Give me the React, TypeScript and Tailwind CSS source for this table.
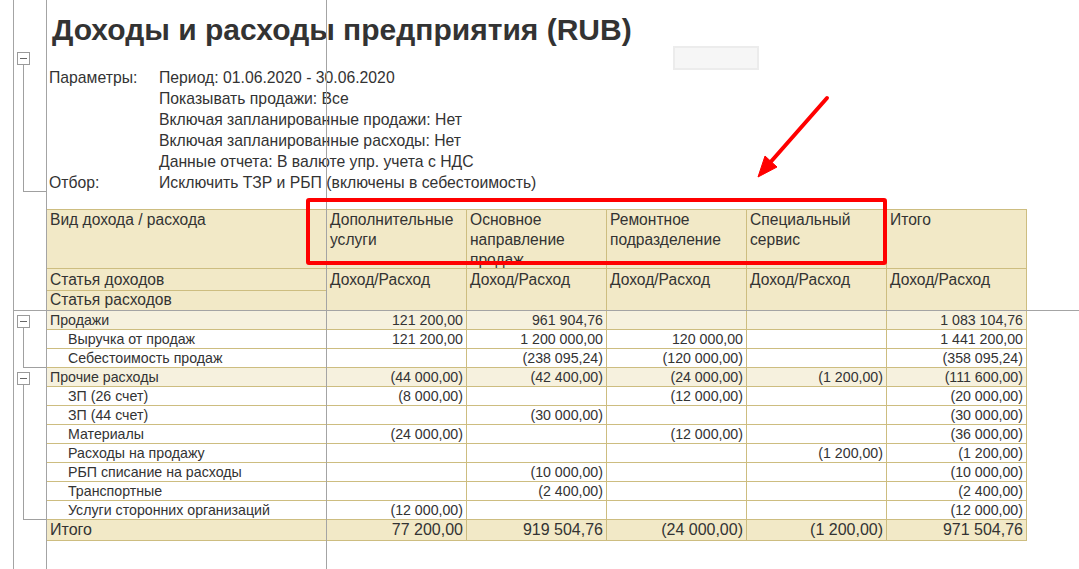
import React from 'react';

type GutterKind = 'none' | 'box' | 'line' | 'end';

interface DataRow {
  label: string;
  vals: string[];
  group?: boolean;
  gutter: GutterKind;
}

const params: [string, string][] = [
  ['Параметры:', 'Период: 01.06.2020 - 30.06.2020'],
  ['', 'Показывать продажи: Все'],
  ['', 'Включая запланированные продажи: Нет'],
  ['', 'Включая запланированные расходы: Нет'],
  ['', 'Данные отчета: В валюте упр. учета с НДС'],
  ['Отбор:', 'Исключить ТЗР и РБП (включены в себестоимость)'],
];

const columns: string[][] = [
  ['Дополнительные', 'услуги'],
  ['Основное', 'направление', 'продаж'],
  ['Ремонтное', 'подразделение'],
  ['Специальный', 'сервис'],
  ['Итого'],
];

const rows: DataRow[] = [
  { label: 'Продажи', group: true, gutter: 'box', vals: ['121 200,00', '961 904,76', '', '', '1 083 104,76'] },
  { label: 'Выручка от продаж', gutter: 'line', vals: ['121 200,00', '1 200 000,00', '120 000,00', '', '1 441 200,00'] },
  { label: 'Себестоимость продаж', gutter: 'end', vals: ['', '(238 095,24)', '(120 000,00)', '', '(358 095,24)'] },
  { label: 'Прочие расходы', group: true, gutter: 'box', vals: ['(44 000,00)', '(42 400,00)', '(24 000,00)', '(1 200,00)', '(111 600,00)'] },
  { label: 'ЗП (26 счет)', gutter: 'line', vals: ['(8 000,00)', '', '(12 000,00)', '', '(20 000,00)'] },
  { label: 'ЗП (44 счет)', gutter: 'line', vals: ['', '(30 000,00)', '', '', '(30 000,00)'] },
  { label: 'Материалы', gutter: 'line', vals: ['(24 000,00)', '', '(12 000,00)', '', '(36 000,00)'] },
  { label: 'Расходы на продажу', gutter: 'line', vals: ['', '', '', '(1 200,00)', '(1 200,00)'] },
  { label: 'РБП списание на расходы', gutter: 'line', vals: ['', '(10 000,00)', '', '', '(10 000,00)'] },
  { label: 'Транспортные', gutter: 'line', vals: ['', '(2 400,00)', '', '', '(2 400,00)'] },
  { label: 'Услуги сторонних организаций', gutter: 'end', vals: ['(12 000,00)', '', '', '', '(12 000,00)'] },
];

const totals = ['77 200,00', '919 504,76', '(24 000,00)', '(1 200,00)', '971 504,76'];

function Gutter({ kind, boxTop = 'pt-[4px]', endH = 'h-full' }: { kind: GutterKind; boxTop?: string; endH?: string }) {
  return (
    <div className={`w-[46px] shrink-0 flex flex-col ${kind === 'box' ? boxTop : ''}`}>
      {kind === 'box' && (
        <>
          <div className="ml-[17px] w-[13px] h-[13px] border border-[#9a9a9a] bg-white flex items-center justify-center">
            <div className="w-[7px] h-px bg-[#666]" />
          </div>
          <div className="ml-[23px] flex-1 border-l border-[#a0a0a0]" />
        </>
      )}
      {kind === 'line' && <div className="ml-[23px] h-full border-l border-[#a0a0a0]" />}
      {kind === 'end' && <div className={`ml-[23px] ${endH} border-l border-b border-[#a0a0a0]`} />}
    </div>
  );
}

export default function App() {
  return (
    <div className="relative w-[1079px] h-[569px] overflow-hidden bg-white text-[#333] font-['Liberation_Sans',Arial,sans-serif]">
      {/* title */}
      <div className="flex h-[50px]">
        <Gutter kind="none" />
        <h1 className="pl-[6px] pt-[13px] text-[30px] leading-[34px] font-bold whitespace-nowrap">
          Доходы и расходы предприятия (RUB)
        </h1>
      </div>

      {/* parameters */}
      <div className="flex h-[17px]">
        <Gutter kind="box" boxTop="pt-[2px]" />
      </div>
      {params.map(([label, value], i) => (
        <div key={i} className="flex h-[21px] text-[15.75px] leading-[21px]">
          <Gutter kind={i === params.length - 1 ? 'end' : 'line'} endH="h-[20px]" />
          <div className="w-[113px] pl-[3px] whitespace-nowrap">{label}</div>
          <div className="whitespace-nowrap">{value}</div>
        </div>
      ))}
      <div className="h-[16px]" />

      {/* table header */}
      <div className="flex">
        <Gutter kind="none" />
        <div className="grid grid-cols-[280px_repeat(5,140px)] grid-rows-[59px_22px_20px] border-t border-l border-[#cdbd80] bg-[#f2e9c7] text-[15.6px] leading-[20px]">
          <div className="border-r border-b border-[#cdbd80] pl-[3px]">Вид дохода / расхода</div>
          {columns.map((lines, i) => (
            <div key={i} className="border-r border-b border-[#cdbd80] pl-[3px] overflow-hidden">
              {lines.map(l => (
                <div key={l} className="whitespace-nowrap">{l}</div>
              ))}
            </div>
          ))}
          <div className="border-r border-b border-[#cdbd80] pl-[3px] leading-[21px]">Статья доходов</div>
          {columns.map((_, i) => (
            <div key={i} className="row-span-2 border-r border-b border-[#cdbd80] pl-[3px] leading-[21px] whitespace-nowrap">
              Доход/Расход
            </div>
          ))}
          <div className="border-r border-b border-[#cdbd80] pl-[3px] leading-[18px]">Статья расходов</div>
        </div>
      </div>

      {/* data rows */}
      {rows.map((r, i) => (
        <div key={i} className="flex h-[19px]">
          <Gutter kind={r.gutter} />
          <div
            className={`grid grid-cols-[280px_repeat(5,140px)] border-l border-[#cdbd80] text-[14.2px] leading-[18px] ${
              r.group ? 'bg-[#f6f1de]' : 'bg-white'
            }`}
          >
            <div className={`border-r border-b border-[#cdbd80] whitespace-nowrap ${r.group ? 'pl-[3px]' : 'pl-[21px]'}`}>
              {r.label}
            </div>
            {r.vals.map((v, j) => (
              <div key={j} className="border-r border-b border-[#cdbd80] pr-[3px] text-right whitespace-nowrap">
                {v}
              </div>
            ))}
          </div>
        </div>
      ))}

      {/* total */}
      <div className="flex h-[21px]">
        <Gutter kind="none" />
        <div className="grid grid-cols-[280px_repeat(5,140px)] border-l border-[#cdbd80] bg-[#f2e9c7] text-[16px] leading-[20px]">
          <div className="border-r border-b border-[#cdbd80] pl-[3px]">Итого</div>
          {totals.map((v, j) => (
            <div key={j} className="border-r border-b border-[#cdbd80] pr-[3px] text-right whitespace-nowrap">
              {v}
            </div>
          ))}
        </div>
      </div>

      {/* spreadsheet grid lines */}
      <div className="pointer-events-none absolute left-[13px] top-0 bottom-0 w-px bg-[#a4a4a4]" />
      <div className="pointer-events-none absolute left-[46px] top-0 bottom-0 w-px bg-[#a4a4a4]" />
      <div className="pointer-events-none absolute left-[326px] top-0 bottom-0 w-px bg-[#a4a4a4]" />
      <div className="pointer-events-none absolute left-[13px] right-0 top-[310px] h-px bg-[#a4a4a4]" />

      {/* floating field */}
      <div className="absolute left-[673px] top-[46px] w-[86px] h-[24px] border-2 border-[#ececec] bg-[#f6f6f6]" />

      {/* annotation */}
      <svg className="pointer-events-none absolute inset-0" width="1079" height="569">
        <rect x="308" y="200" width="577" height="63" rx="1" fill="none" stroke="#ff0000" strokeWidth="4" />
        <line x1="827" y1="98" x2="768" y2="165" stroke="#ff0000" strokeWidth="4" strokeLinecap="round" />
        <polygon points="758,177 765,156 777,167" fill="#ff0000" stroke="#ff0000" strokeWidth="1" strokeLinejoin="round" />
      </svg>
    </div>
  );
}
